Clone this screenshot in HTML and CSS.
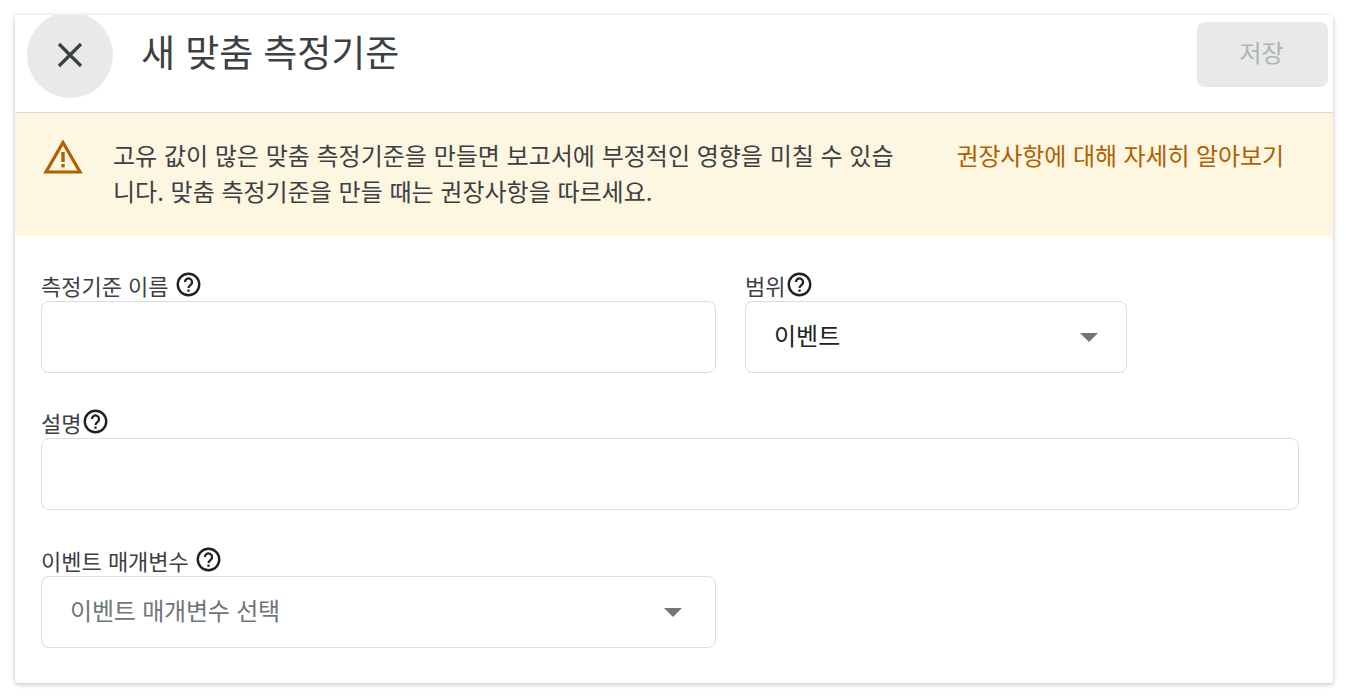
FILE: index.html
```html
<!DOCTYPE html>
<html lang="ko">
<head>
<meta charset="utf-8">
<title>새 맞춤 측정기준</title>
<link rel="stylesheet" href="styles.css">
</head>
<body>
<main class="card">
  <header class="head">
    <button class="close" aria-label="닫기">
      <svg width="28" height="28" viewBox="0 0 28 28"><path d="M3 3L25 25M25 3L3 25" fill="none" stroke="#3c4043" stroke-width="3.2"/></svg>
    </button>
    <h1 class="title">새 맞춤 측정기준</h1>
    <button class="save">저장</button>
  </header>
  <section class="banner">
    <svg class="warn" width="40" height="34" viewBox="0 0 40 34"><path d="M20 2.5L37 32H3Z" fill="none" stroke="#b06000" stroke-width="3.2"/><rect x="18.3" y="12" width="3.4" height="10" fill="#b06000"/><rect x="18.3" y="24" width="3.4" height="3.4" fill="#b06000"/></svg>
    <p class="msg">고유 값이 많은 맞춤 측정기준을 만들면 보고서에 부정적인 영향을 미칠 수 있습니다. 맞춤 측정기준을 만들 때는 권장사항을 따르세요.</p>
    <a class="link">권장사항에 대해 자세히 알아보기</a>
  </section>
  <form class="form">
    <div class="row">
      <div class="field wide">
        <div class="label spaced">측정기준 이름 <svg class="help" viewBox="0 0 24 24"><use href="#q"/></svg></div>
        <div class="box"></div>
      </div>
      <div class="field narrow">
        <div class="label">범위<svg class="help" viewBox="0 0 24 24"><use href="#q"/></svg></div>
        <div class="box select"><span class="value">이벤트</span><span class="arrow"></span></div>
      </div>
    </div>
    <div class="field full">
      <div class="label">설명<svg class="help" viewBox="0 0 24 24"><use href="#q"/></svg></div>
      <div class="box"></div>
    </div>
    <div class="field wide last">
      <div class="label spaced">이벤트 매개변수 <svg class="help" viewBox="0 0 24 24"><use href="#q"/></svg></div>
      <div class="box select tight"><span class="value muted">이벤트 매개변수 선택</span><span class="arrow"></span></div>
    </div>
  </form>
</main>
<svg class="defs" width="0" height="0"><defs><g id="q"><circle cx="12" cy="12" r="10.3" fill="none" stroke="#202124" stroke-width="2.3"/><path d="M8.6 9.6a3.4 3.4 0 1 1 5.6 2.6c-1.2 1-2.2 1.6-2.2 3.2" fill="none" stroke="#202124" stroke-width="2.2"/><rect x="10.9" y="16.8" width="2.2" height="2.2" fill="#202124"/></g></defs></svg>
</body>
</html>
```

FILE: styles.css
```css
* { box-sizing: border-box; }
html, body { margin: 0; height: 100%; background: #fff; overflow: hidden; }
body { padding: 15px; font-family: "Noto Sans CJK KR", "Noto Sans", sans-serif; color: #3c4043; }
.card { width: 1318px; height: 668px; background: #fff; border-radius: 3px; overflow: hidden; box-shadow: 0 2px 4px rgba(60,64,67,.22), 0 0 5px rgba(60,64,67,.12); }
.head { height: 98px; display: flex; align-items: flex-start; border-bottom: 1px solid #dadce0; padding: 0 5px 0 12px; }
.close { width: 86px; height: 86px; margin-top: -3px; border: 0; border-radius: 50%; background: #e8eaea; display: flex; align-items: center; justify-content: center; padding: 0; flex: none; }
.title { flex: 1; margin: 8px 0 0 28px; font-size: 37px; line-height: 56px; font-weight: 400; color: #3c4043; letter-spacing: -.1px; }
.save { width: 131px; height: 65px; margin-top: 7px; padding: 0 2px 6px 0; border: 0; border-radius: 8px; background: #e8eaea; color: #b0b3b5; font: 400 24px/1 "Noto Sans CJK KR", sans-serif; }
.banner { height: 123px; background: #fdf6e0; display: flex; align-items: flex-start; padding: 26px 49px 0 28px; }
.warn { flex: none; margin-top: 1px; }
.msg { width: 790px; margin: -2px 0 0 30px; font-size: 24px; line-height: 36px; color: #3c4043; }
.link { margin: -2px 0 0 auto; font-size: 24px; line-height: 36px; color: #b06000; white-space: nowrap; letter-spacing: -.1px; }
.form { padding: 34px 34px 0 26px; display: flex; flex-direction: column; gap: 34px; }
.row { display: flex; gap: 29px; }
.wide { width: 675px; }
.narrow { width: 382px; }
.last { margin-top: 1px; }
.label { height: 31px; font-size: 22px; line-height: 30px; color: #3c4043; display: flex; align-items: flex-start; white-space: pre; }
.help { width: 25px; height: 25px; margin-top: 2px; margin-left: 2px; }
.spaced .help { margin-left: 1px; }
.box { height: 72px; border: 1px solid #dadce0; border-radius: 8px; background: #fff; }
.select { display: flex; align-items: center; justify-content: space-between; padding: 0 28px 0 28px; }
.tight { padding-right: 33px; }
.value { font-size: 24px; line-height: 36px; color: #202124; margin-top: -4px; }
.muted { color: #70757a; letter-spacing: -.2px; }
.arrow { width: 0; height: 0; border-left: 9px solid transparent; border-right: 9px solid transparent; border-top: 9px solid #757575; margin-top: 1px; }
.defs { position: absolute; }
```
